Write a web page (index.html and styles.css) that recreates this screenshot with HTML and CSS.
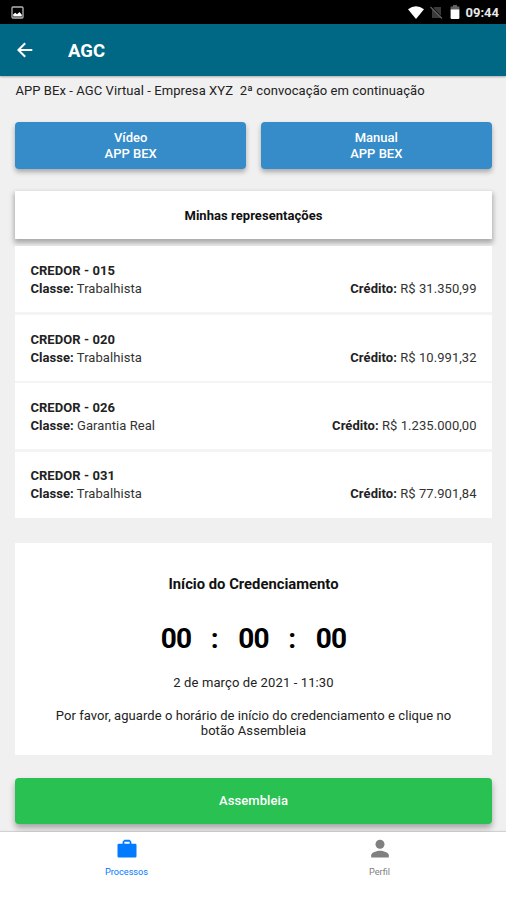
FILE: index.html
```html
<!DOCTYPE html>
<html lang="pt-BR">
<head>
<meta charset="utf-8">
<title>AGC</title>
<link rel="stylesheet" href="styles.css">
</head>
<body>
<div class="app">
  <div class="status">
    <svg class="status-image" width="13" height="13" viewBox="0 0 13 13"><rect x="1" y="1" width="11" height="11" rx="1" fill="none" stroke="#b5b5b5" stroke-width="1.3"/><path d="M2.2 10.5V8.2L4.3 6.8 6 8.3 8.5 6l2.3 2.8v1.7z" fill="#fff"/></svg>
    <div class="status-right">
      <svg class="wifi" width="16" height="13" viewBox="0 0 16 13"><path d="M0 3.2Q8-2.6 16 3.2L8 13z" fill="#fff"/></svg>
      <svg class="sim" width="13" height="13" viewBox="0 0 13 13"><path d="M4.2 1H11v11H2V4z" fill="#3b3b3b"/><path d="M1.5 1L13 12.5" stroke="#000" stroke-width="1.2"/><path d="M.5 1l11.5 11.5" stroke="#666" stroke-width="1.1"/></svg>
      <svg class="battery" width="10" height="14" viewBox="0 0 10 14"><path d="M3 0h4v1.4h2.4V5H.6V1.4H3z" fill="#626262"/><path d="M.6 4.5h8.8V13a1 1 0 0 1-1 1H1.6a1 1 0 0 1-1-1z" fill="#fff"/></svg>
      <span class="clock">09:44</span>
    </div>
  </div>
  <header class="topbar">
    <svg width="16" height="16" viewBox="0 0 16 16"><path d="M15.3 8H2M8.2 1.2L1.4 8l6.8 6.8" fill="none" stroke="#fff" stroke-width="2"/></svg>
    <h1>AGC</h1>
  </header>
  <main class="content">
    <p class="subtitle">APP BEx - AGC Virtual - Empresa XYZ&nbsp; 2ª convocação em continuação</p>
    <div class="actions">
      <button class="blue">Vídeo<br>APP BEX</button>
      <button class="blue">Manual<br>APP BEX</button>
    </div>
    <h2 class="list-title"><span>Minhas representações</span></h2>
    <ul class="creditors">
      <li><b class="name">CREDOR - 015</b><div class="line"><span><b>Classe:</b> Trabalhista</span><span><b>Crédito:</b> R$ 31.350,99</span></div></li>
      <li><b class="name">CREDOR - 020</b><div class="line"><span><b>Classe:</b> Trabalhista</span><span><b>Crédito:</b> R$ 10.991,32</span></div></li>
      <li><b class="name">CREDOR - 026</b><div class="line"><span><b>Classe:</b> Garantia Real</span><span><b>Crédito:</b> R$ 1.235.000,00</span></div></li>
      <li><b class="name">CREDOR - 031</b><div class="line"><span><b>Classe:</b> Trabalhista</span><span><b>Crédito:</b> R$ 77.901,84</span></div></li>
    </ul>
    <section class="countdown">
      <h2>Início do Credenciamento</h2>
      <div class="timer"><span>00</span><i>:</i><span>00</span><i>:</i><span>00</span></div>
      <p class="date">2 de março de 2021 - 11:30</p>
      <p class="hint">Por favor, aguarde o horário de início do credenciamento e clique no<br>botão Assembleia</p>
    </section>
    <button class="green">Assembleia</button>
  </main>
  <nav class="tabs">
    <a class="tab active">
      <svg width="20" height="19" viewBox="0 0 20 19"><path d="M.5 6a1.3 1.3 0 0 1 1.3-1.3H5.6V2.8L7.4.8h5.2l1.8 2v1.9h3.8A1.3 1.3 0 0 1 19.5 6v11.2a1.3 1.3 0 0 1-1.3 1.3H1.8A1.3 1.3 0 0 1 .5 17.2zM7.4 4.7h5.2v-2H7.4z" fill="#007aff" fill-rule="evenodd"/></svg>
      <span>Processos</span>
    </a>
    <a class="tab">
      <svg width="20" height="19" viewBox="0 0 20 19"><circle cx="10" cy="5.2" r="4.5" fill="#808080"/><path d="M1.2 18.4v-2.2c0-3 5.9-4.5 8.8-4.5s8.8 1.5 8.8 4.5v2.2z" fill="#808080"/></svg>
      <span>Perfil</span>
    </a>
  </nav>
</div>
</body>
</html>
```

FILE: styles.css
```css
* { box-sizing: border-box; margin: 0; padding: 0; }
body { font-family: Roboto, "Liberation Sans", sans-serif; font-size: 13px; color: #222; background: #f0f0f0; }
.app { width: 506px; height: 900px; display: flex; flex-direction: column; overflow: hidden; }

.status { flex: none; height: 24px; background: #000; display: flex; justify-content: space-between; align-items: center; padding: 0 7px 0 11px; }
.status-right { display: flex; align-items: center; }
.sim { margin-left: 6px; }
.battery { margin-left: 7px; }
.clock { margin-left: 6px; color: #e8e8e8; font-size: 13px; font-weight: 700; line-height: 24px; padding-top: 2px; }

.topbar { flex: none; height: 52px; background: #006885; display: flex; align-items: center; padding-left: 17px; box-shadow: 0 1px 2px rgba(0, 0, 0, .3); }
.topbar h1 { color: #fff; font-size: 18.5px; font-weight: 700; margin: 2px 0 0 35px; }

.content { flex: 1; min-height: 0; padding: 7px 14.4px 0 15.4px; }
.subtitle { height: 39px; line-height: 16px; white-space: nowrap; letter-spacing: .08px; }
.actions { display: flex; gap: 15px; height: 47px; }
button { border: 0; border-radius: 4px; color: #fff; font-family: inherit; font-size: 13px; font-weight: 500; line-height: 15.5px; box-shadow: 0 3px 5px rgba(0, 0, 0, .3); }
.blue { flex: 1; background: #368cc9; }

.list-title { height: 48px; margin-top: 22.4px; background: #fff; display: flex; align-items: center; justify-content: center; font-size: 13px; letter-spacing: .05px; color: #111; box-shadow: 0 3px 5px 1px rgba(0, 0, 0, .3); }
.creditors { list-style: none; margin-top: 7px; display: flex; flex-direction: column; gap: 2.4px; position: relative; background: #f4f4f4; }
.creditors li { height: 66px; background: #fff; padding: 15.9px 15px 0; line-height: 18px; color: #333; letter-spacing: .06px; }
.creditors li:first-child { padding-top: 16px; }
.creditors b { color: #222; }
.name { display: block; }
.line { display: flex; justify-content: space-between; }

.countdown { margin-top: 25.4px; height: 212px; background: #fff; text-align: center; padding-top: 31px; }
.countdown h2 { font-size: 14.8px; line-height: 20px; color: #111; }
.timer { display: flex; justify-content: center; margin-top: 28.5px; font-size: 28px; line-height: 34px; font-weight: 700; color: #000; }
.timer span { letter-spacing: -.8px; }
.timer i { width: 47px; font-style: normal; }
.date { margin-top: 18.5px; line-height: 16px; letter-spacing: .12px; }
.hint { margin-top: 17px; line-height: 15.5px; letter-spacing: .06px; }
.green { display: block; width: 100%; height: 46.5px; margin-top: 22.7px; background: #28c152; letter-spacing: .08px; box-shadow: 0 4px 6px rgba(0, 0, 0, .32); }

.tabs { flex: none; height: 68px; background: #fff; display: flex; position: relative; box-shadow: 0 -1px 1px rgba(0, 0, 0, .12); }
.tab { flex: 1; display: flex; flex-direction: column; align-items: center; padding-top: 7px; color: #808080; font-size: 9.2px; }
.tab span { margin-top: 8px; line-height: 12px; }
.active { color: #007aff; }
```
